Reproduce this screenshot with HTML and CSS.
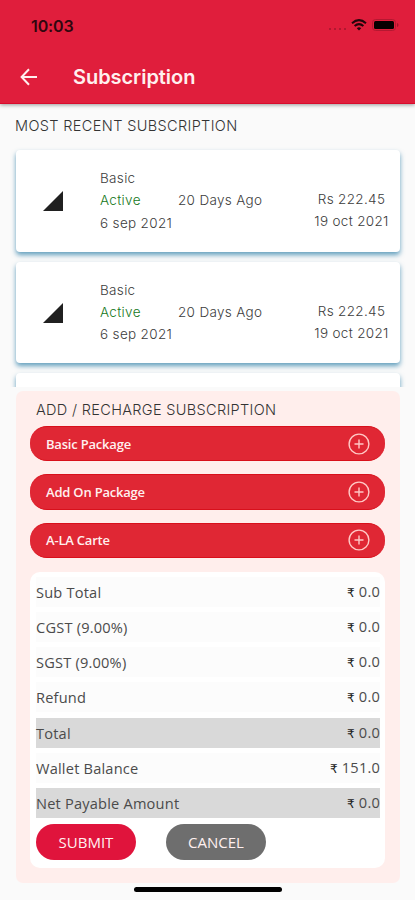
FILE: index.html
```html
<!DOCTYPE html>
<html lang="en">
<head>
<meta charset="utf-8">
<title>Subscription</title>
<link rel="stylesheet" href="styles.css">
</head>
<body>
<div class="screen">
  <header class="header">
    <div class="status">
      <span class="time">10:03</span>
      <span class="dots"><i></i><i></i><i></i><i></i></span>
      <svg class="wifi" width="16" height="12" viewBox="0 0 16 12" fill="none" stroke="#21060b" stroke-width="2"><path d="M1 4.2Q8-2 15 4.2"/><path d="M3.6 7Q8 3.2 12.4 7"/><path d="M8 11.6L5.8 9.3Q8 7.4 10.2 9.3Z" fill="#21060b" stroke="none"/></svg>
      <svg class="battery" width="27" height="12" viewBox="0 0 27 12"><rect x=".5" y=".5" width="23" height="11" rx="3" fill="none" stroke="#b51831"/><rect x="2" y="2" width="20" height="8" rx="1.5" fill="#080001"/><path d="M25 4v4q1.5-.5 1.5-2T25 4" fill="#a3142b"/></svg>
    </div>
    <div class="bar">
      <svg class="back" width="18" height="18" viewBox="0 0 18 18" fill="none" stroke="#fff0ef" stroke-width="2"><path d="M17 9H2M9 1.3L1.6 9L9 16.7"/></svg>
      <h1>Subscription</h1>
    </div>
  </header>
  <h2 class="recent-title">MOST RECENT SUBSCRIPTION</h2>
  <section class="recent">
    <article class="card">
      <svg class="signal" width="20" height="20" viewBox="0 0 20 20"><path d="M0 20L20 0V20Z" fill="#202020"/></svg>
      <div class="plan"><p class="basic">Basic</p><p class="active">Active</p><p class="start">6 sep 2021</p></div>
      <p class="ago">20 Days Ago</p>
      <div class="price"><p class="amount">Rs 222.45</p><p class="end">19 oct 2021</p></div>
    </article>
    <article class="card">
      <svg class="signal" width="20" height="20" viewBox="0 0 20 20"><path d="M0 20L20 0V20Z" fill="#202020"/></svg>
      <div class="plan"><p class="basic">Basic</p><p class="active">Active</p><p class="start">6 sep 2021</p></div>
      <p class="ago">20 Days Ago</p>
      <div class="price"><p class="amount">Rs 222.45</p><p class="end">19 oct 2021</p></div>
    </article>
    <article class="card"></article>
  </section>
  <section class="panel">
    <h2 class="panel-title">ADD / RECHARGE SUBSCRIPTION</h2>
    <div class="packages">
      <button class="package"><span>Basic Package</span><svg width="22" height="22" viewBox="0 0 22 22" fill="none" stroke="#ffc8c5" stroke-width="1.4"><circle cx="11" cy="11" r="9.9"/><path d="M11 6.5v9M6.5 11h9"/></svg></button>
      <button class="package"><span>Add On Package</span><svg width="22" height="22" viewBox="0 0 22 22" fill="none" stroke="#ffc8c5" stroke-width="1.4"><circle cx="11" cy="11" r="9.9"/><path d="M11 6.5v9M6.5 11h9"/></svg></button>
      <button class="package"><span>A-LA Carte</span><svg width="22" height="22" viewBox="0 0 22 22" fill="none" stroke="#ffc8c5" stroke-width="1.4"><circle cx="11" cy="11" r="9.9"/><path d="M11 6.5v9M6.5 11h9"/></svg></button>
    </div>
    <div class="summary">
      <dl>
        <div class="row"><dt>Sub Total</dt><dd><b>₹</b> 0.0</dd></div>
        <div class="row"><dt>CGST (9.00%)</dt><dd><b>₹</b> 0.0</dd></div>
        <div class="row"><dt>SGST (9.00%)</dt><dd><b>₹</b> 0.0</dd></div>
        <div class="row"><dt>Refund</dt><dd><b>₹</b> 0.0</dd></div>
        <div class="row shaded"><dt>Total</dt><dd><b>₹</b> 0.0</dd></div>
        <div class="row"><dt>Wallet Balance</dt><dd><b>₹</b> 151.0</dd></div>
        <div class="row shaded"><dt>Net Payable Amount</dt><dd><b>₹</b> 0.0</dd></div>
      </dl>
      <div class="actions"><button class="submit">SUBMIT</button><button class="cancel">CANCEL</button></div>
    </div>
  </section>
  <div class="home"></div>
</div>
</body>
</html>
```
FILE: styles.css
```css
* { box-sizing: border-box; margin: 0; padding: 0; }
body { background: #fafafa; font-family: Inter, sans-serif; color: #444; overflow: hidden; }
.screen { width: 415px; height: 900px; display: flex; flex-direction: column; overflow: hidden; }
button { border: 0; font: inherit; }
.header { height: 104px; flex: none; background: #e01e3c; border-bottom: 1px solid #d80b2c; box-shadow: 0 1px 4px rgba(0,0,0,.4); }
.status { height: 50px; display: flex; align-items: center; padding: 0 16px 0 31px; }
.time { font-size: 16px; font-weight: 600; color: #30070e; letter-spacing: -.1px; line-height: 20px; margin-top: 1px; }
.dots { margin-left: auto; margin-right: 5px; margin-top: 8px; display: flex; gap: 3px; }
.dots i { width: 2px; height: 2px; background: #a3162c; border-radius: 1px; }
.wifi { margin-right: 5px; }
.bar { height: 53px; display: flex; align-items: center; padding-left: 20px; }
.back { margin-right: 35px; }
h1 { font-size: 20px; font-weight: 600; letter-spacing: -.05px; color: #fff0ef; line-height: 26px; }
h2 { font-weight: 300; font-size: 14.5px; line-height: 20px; color: #333; white-space: nowrap; }
.recent-title { margin: 12px 0 0 15px; letter-spacing: .36px; }
.recent { height: 251px; padding: 14px 15px 0 16px; overflow: hidden; display: flex; flex-direction: column; gap: 10px; }
.card { height: 101.5px; flex: none; background: #fff; border-radius: 4px; box-shadow: 0 3px 5px rgba(50,130,170,.75); display: grid; grid-template-columns: 84px 78px 1fr 90px; color: #3c3c3c; font-size: 13.5px; line-height: 22.3px; font-weight: 350; letter-spacing: .33px; white-space: nowrap; }
.signal { margin: 41px 0 0 27px; }
.plan { padding-top: 17px; }
.active { color: #16781b; }
.ago { padding-top: 39px; }
.price { padding: 38px 7px 0 0; text-align: center; }
.amount, .end { margin: 0 -4px; }
.panel { width: 384px; height: 492px; flex: none; margin: 4px 0 0 16px; padding: 9px 15px 0 14px; background: #ffeeec; border-radius: 7px; }
.panel-title { margin-left: 6px; letter-spacing: .33px; }
.packages { display: grid; gap: 13px; margin-top: 6px; }
.package { height: 35.3px; border-radius: 17px; background: #e02734; border-top: 1px solid #d8101b; border-bottom: 1px solid #d8101b; display: flex; justify-content: space-between; align-items: center; padding: 0 15px 0 16px; color: #fff0ef; font: 600 13px/20px "Open Sans", sans-serif; letter-spacing: -.2px; }
.summary { height: 296px; margin-top: 14px; padding: 5px 5px 0 6px; background: #fff; border-radius: 10px; font-family: "Open Sans", sans-serif; }
dl { display: grid; gap: 5.2px; }
.row { height: 30px; background: #fcfcfc; display: flex; align-items: center; justify-content: space-between; font-size: 14.6px; letter-spacing: .2px; line-height: 20px; color: #4b4b4b; }
.shaded { background: #d9d9d9; }
dd b { font-family: "DejaVu Sans", sans-serif; font-size: 12px; font-weight: 400; color: #222; }
.actions { display: flex; gap: 30px; margin-top: 6px; }
.actions button { width: 100px; height: 36px; border-radius: 18px; background: #e0143c; color: #fff0f0; font: 500 15px/20px "Open Sans", sans-serif; }
.actions .cancel { background: #6e6e6e; }
.home { width: 148px; height: 5px; flex: none; background: #000; border-radius: 3px; margin: 4px 0 0 134px; }
```
